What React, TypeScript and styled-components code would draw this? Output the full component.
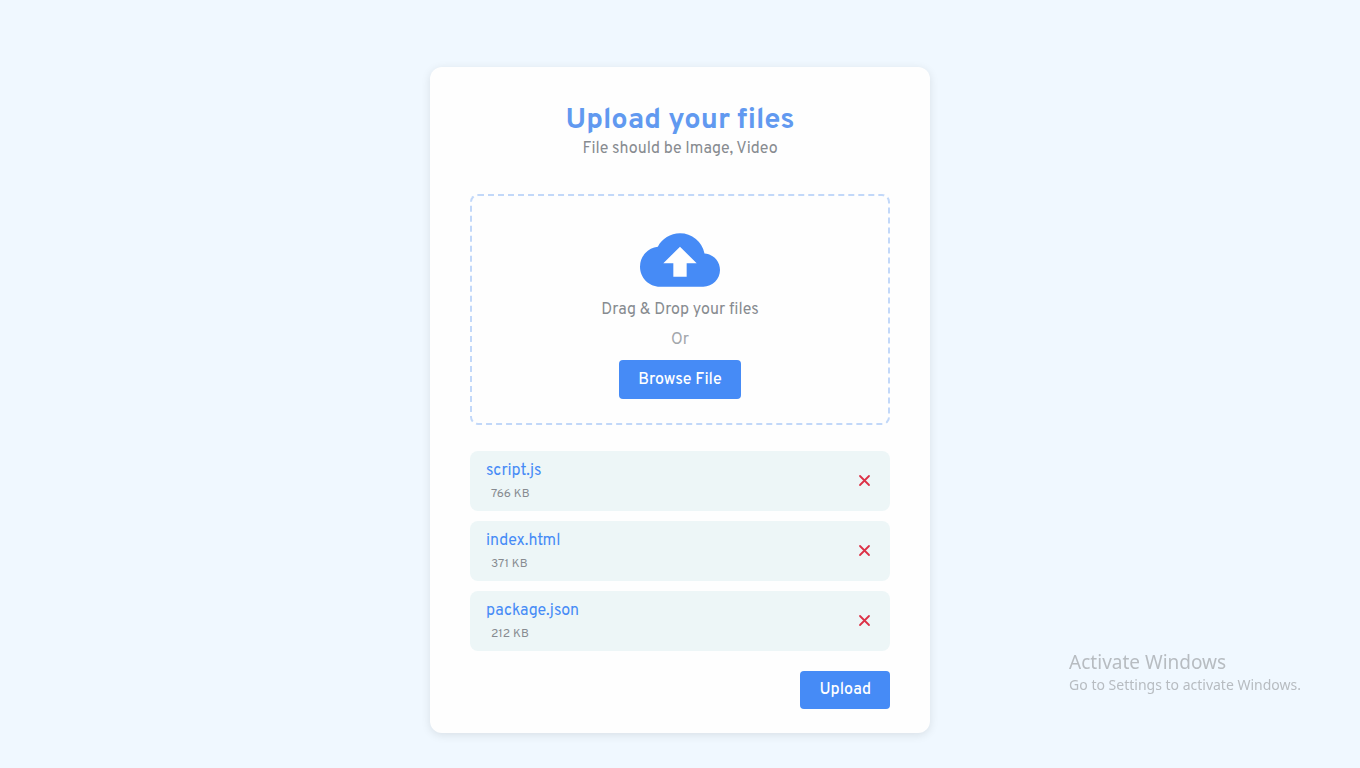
import React, { useState } from "react";
import styled, { createGlobalStyle } from "styled-components";
import { MdCloudUpload } from "react-icons/md";

const GlobalStyle = createGlobalStyle`
  * {
    box-sizing: border-box;
  }
  body {
    margin: 0;
    background: #f0f8ff;
    font-family: Overpass, Roboto, sans-serif;
    font-size: 16px;
    line-height: 24px;
  }
`;

const Page = styled.main`
  display: flex;
  justify-content: center;
  align-items: flex-start;
  padding: 67px 16px 35px;
`;

const Card = styled.section`
  width: 100%;
  max-width: 500px;
  padding: 37px 40px 24px;
  background: #fefefe;
  border-radius: 12px;
  box-shadow: 0 2px 10px rgba(0, 0, 0, 0.1);
`;

const Header = styled.header`
  text-align: center;
  margin-bottom: 33px;
`;

const Title = styled.h1`
  margin: 0;
  font-size: 29px;
  line-height: 33px;
  font-weight: 700;
  color: #6199f0;
`;

const Subtitle = styled.p`
  margin: 0;
  color: #878b90;
`;

const DropZone = styled.div`
  display: flex;
  flex-direction: column;
  align-items: center;
  padding: 24px;
  border: 2px dashed #c2d8f9;
  border-radius: 8px;
`;

const CloudIcon = styled(MdCloudUpload)`
  display: block;
  font-size: 80px;
  color: #468bf6;
  margin-bottom: -2px;
`;

const DropText = styled.p<{ $faint?: boolean }>`
  margin: 0 0 6px;
  color: ${(p) => (p.$faint ? "#a2a6ab" : "#878b90")};
`;

const Button = styled.button<{ $height: number }>`
  height: ${(p) => p.$height}px;
  padding: 0 19px;
  border: 0;
  border-radius: 4px;
  background: #468bf6;
  color: #fff;
  font: inherit;
  font-weight: 500;
  cursor: pointer;
`;

const BrowseButton = styled(Button)`
  margin-top: 2px;
`;

const FileList = styled.ul`
  display: grid;
  gap: 10px;
  margin: 26px 0 20px;
  padding: 0;
  list-style: none;
`;

const FileRow = styled.li`
  display: flex;
  align-items: center;
  justify-content: space-between;
  height: 60px;
  padding: 0 16px;
  border-radius: 8px;
  background: #edf6f7;
`;

const FileInfo = styled.div`
  padding-top: 3px;
`;

const FileName = styled.div`
  color: #468bf6;
`;

const FileSize = styled.div`
  padding-left: 5px;
  font-size: 12px;
  line-height: 23px;
  color: #878b90;
`;

const RemoveButton = styled.button`
  display: flex;
  padding: 3px;
  border: 0;
  background: none;
  color: #dc3147;
  cursor: pointer;
`;

const Footer = styled.footer`
  display: flex;
  justify-content: flex-end;
`;

const Watermark = styled.aside`
  position: fixed;
  right: 59px;
  bottom: 73px;
  font-family: "Segoe UI", "Noto Sans", sans-serif;
  font-size: 14px;
  line-height: 20px;
  color: #b7bcc1;
  pointer-events: none;
`;

const WatermarkTitle = styled.div`
  font-size: 19px;
  line-height: 26px;
`;

const initialFiles = [
  { name: "script.js", size: "766 KB" },
  { name: "index.html", size: "371 KB" },
  { name: "package.json", size: "212 KB" },
];

function CrossIcon() {
  return (
    <svg width="13" height="14" viewBox="0 0 13 14" aria-hidden>
      <path
        d="M2 2L11 11M11 2L2 11"
        stroke="currentColor"
        strokeWidth="1.8"
        strokeLinecap="round"
        fill="none"
      />
    </svg>
  );
}

export default function App() {
  const [files, setFiles] = useState(initialFiles);

  return (
    <>
      <GlobalStyle />
      <Page>
        <Card>
          <Header>
            <Title>Upload your files</Title>
            <Subtitle>File should be Image, Video</Subtitle>
          </Header>
          <DropZone>
            <CloudIcon aria-hidden />
            <DropText>Drag &amp; Drop your files</DropText>
            <DropText $faint>Or</DropText>
            <BrowseButton type="button" $height={39}>
              Browse File
            </BrowseButton>
          </DropZone>
          <FileList>
            {files.map((file) => (
              <FileRow key={file.name}>
                <FileInfo>
                  <FileName>{file.name}</FileName>
                  <FileSize>{file.size}</FileSize>
                </FileInfo>
                <RemoveButton
                  type="button"
                  aria-label={`Remove ${file.name}`}
                  onClick={() => setFiles(files.filter((f) => f !== file))}
                >
                  <CrossIcon />
                </RemoveButton>
              </FileRow>
            ))}
          </FileList>
          <Footer>
            <Button type="button" $height={38}>
              Upload
            </Button>
          </Footer>
        </Card>
      </Page>
      <Watermark>
        <WatermarkTitle>Activate Windows</WatermarkTitle>
        <div>Go to Settings to activate Windows.</div>
      </Watermark>
    </>
  );
}
